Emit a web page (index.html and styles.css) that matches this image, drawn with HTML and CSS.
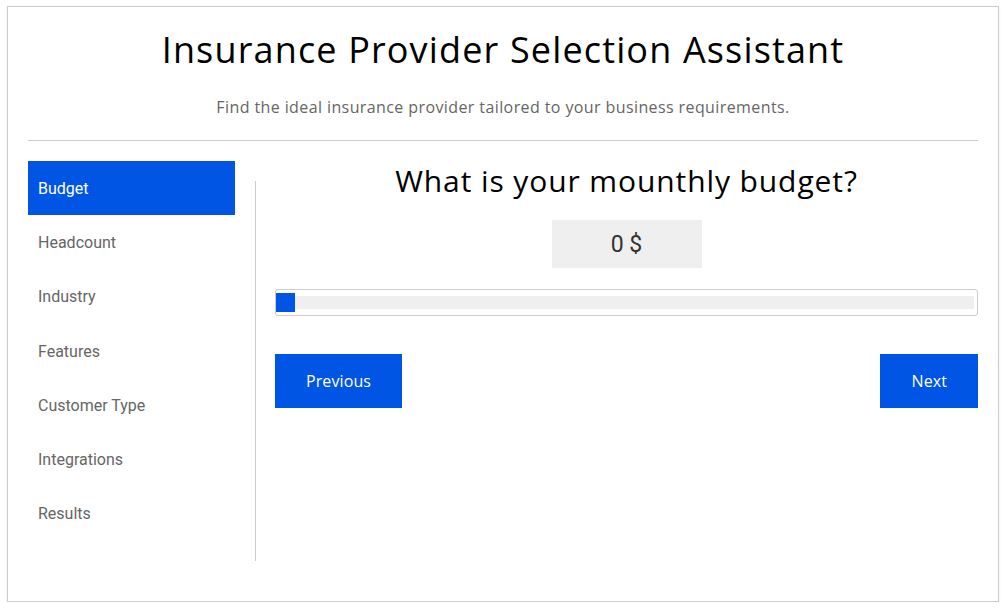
FILE: index.html
```html
<!DOCTYPE html>
<html lang="en">
<head>
    <meta charset="UTF-8">
    <title>Insurance Provider Selection Assistant</title>
    <link rel="stylesheet" href="styles.css">
</head>
<body>

<div class="container">
    <div class="header">
        <h1>Insurance Provider Selection Assistant</h1>
        <p class="subtitle">Find the ideal insurance provider tailored to your business requirements.</p>
    </div>

    <div class="wizard">
        <ul class="steps">
            <li class="active">Budget</li>
            <li>Headcount</li>
            <li>Industry</li>
            <li>Features</li>
            <li>Customer Type</li>
            <li>Integrations</li>
            <li>Results</li>
        </ul>

        <div class="divider"></div>

        <div class="step-content">
            <h2>What is your mounthly budget?</h2>
            <div class="budget-value">0 $</div>

            <div class="slider">
                <div class="track">
                    <div class="thumb"></div>
                </div>
            </div>

            <div class="buttons">
                <button class="btn">Previous</button>
                <button class="btn">Next</button>
            </div>
        </div>
    </div>
</div>

</body>
</html>
```

FILE: styles.css
```css
body {
    margin: 0;
    padding: 6px 0 0 7px;
    background-color: #ffffff;
    font-family: "Open Sans", sans-serif;
}
.container {
    width: 950px;
    height: 554px;
    padding: 0 20px 40px 20px;
    border: 1px solid #cccccc;
    box-shadow: 0 1px 3px rgba(0,0,0,0.08);
}
.header {
    text-align: center;
    border-bottom: 1px solid #cccccc;
    padding-top: 23px;
    box-sizing: border-box;
    height: 134px;
}
h1 {
    margin: 0;
    font-size: 36px;
    font-weight: 400;
    color: #000000;
    line-height: 40px;
    letter-spacing: 1.15px;
}
.subtitle {
    margin: 26px 0 0 0;
    font-size: 16px;
    color: #666666;
    letter-spacing: 0.4px;
}
.wizard {
    display: flex;
    margin-top: 20px;
}
.steps {
    list-style: none;
    margin: 0;
    padding: 0 0 21px 0;
    width: 207px;
    font-family: Roboto, sans-serif;
}
.steps li {
    height: 54.2px;
    line-height: 56px;
    padding-left: 10px;
    font-size: 16px;
    color: #666666;
}
.steps li.active {
    background-color: #0055e5;
    color: #ffffff;
}
.divider {
    width: 1px;
    margin: 20px 19px 0 20px;
    background-color: #cccccc;
}
.step-content {
    flex: 1;
}
h2 {
    margin: 0;
    text-align: center;
    font-size: 30px;
    font-weight: 400;
    line-height: 40px;
    color: #000000;
    letter-spacing: 0.9px;
}
.budget-value {
    width: 150px;
    height: 48px;
    line-height: 49px;
    margin: 19px auto 0 auto;
    text-align: center;
    background-color: #efefef;
    font-family: Roboto, sans-serif;
    font-size: 23px;
    color: #333333;
}
.slider {
    margin-top: 21px;
    height: 27px;
    border: 1px solid #cccccc;
    border-radius: 3px;
    padding: 6px 3px 0 0;
    box-sizing: border-box;
}
.track {
    position: relative;
    height: 13px;
    background-color: #efefef;
}
.thumb {
    position: absolute;
    left: 0;
    top: -3px;
    width: 19px;
    height: 19px;
    background-color: #0055e5;
}
.buttons {
    display: flex;
    justify-content: space-between;
    margin-top: 38px;
}
.btn {
    height: 54px;
    padding: 0 31px;
    border: none;
    background-color: #0055e5;
    color: #ffffff;
    font-family: "Open Sans", sans-serif;
    font-size: 16px;
    letter-spacing: 0.1px;
    cursor: pointer;
}
```
